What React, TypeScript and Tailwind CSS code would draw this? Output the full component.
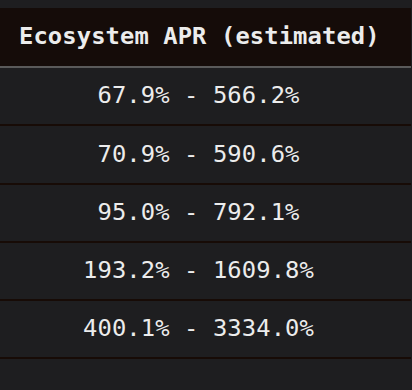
import React from "react";

interface AprRange {
  min: string;
  max: string;
}

const ranges: AprRange[] = [
  { min: "67.9%", max: "566.2%" },
  { min: "70.9%", max: "590.6%" },
  { min: "95.0%", max: "792.1%" },
  { min: "193.2%", max: "1609.8%" },
  { min: "400.1%", max: "3334.0%" },
];

function App() {
  return (
    <div
      className="w-[412px] h-[390px] bg-[#1e1e20] pt-2 pr-px overflow-hidden"
      style={{ fontFamily: '"DejaVu Sans Mono", "Liberation Mono", monospace' }}
    >
      {/* 표 헤더 */}
      <div className="h-[58px] bg-[#150c09] border-b-2 border-[#5a5a5a] flex items-center pl-[19px] box-content">
        <span className="text-[23.8px] font-semibold text-[#ececec] tracking-[0.1px]">
          Ecosystem APR (estimated)
        </span>
      </div>
      {ranges.map((r, i) => (
        <div
          key={i}
          className="h-[56.25px] bg-[#1e1e20] border-b-2 border-[#170b06] flex items-center justify-center pr-[14px] box-content"
        >
          <span className="text-[23.8px] text-[#ececec] tracking-[0.1px]">
            {r.min} - {r.max}
          </span>
        </div>
      ))}
    </div>
  );
}

export default App;
